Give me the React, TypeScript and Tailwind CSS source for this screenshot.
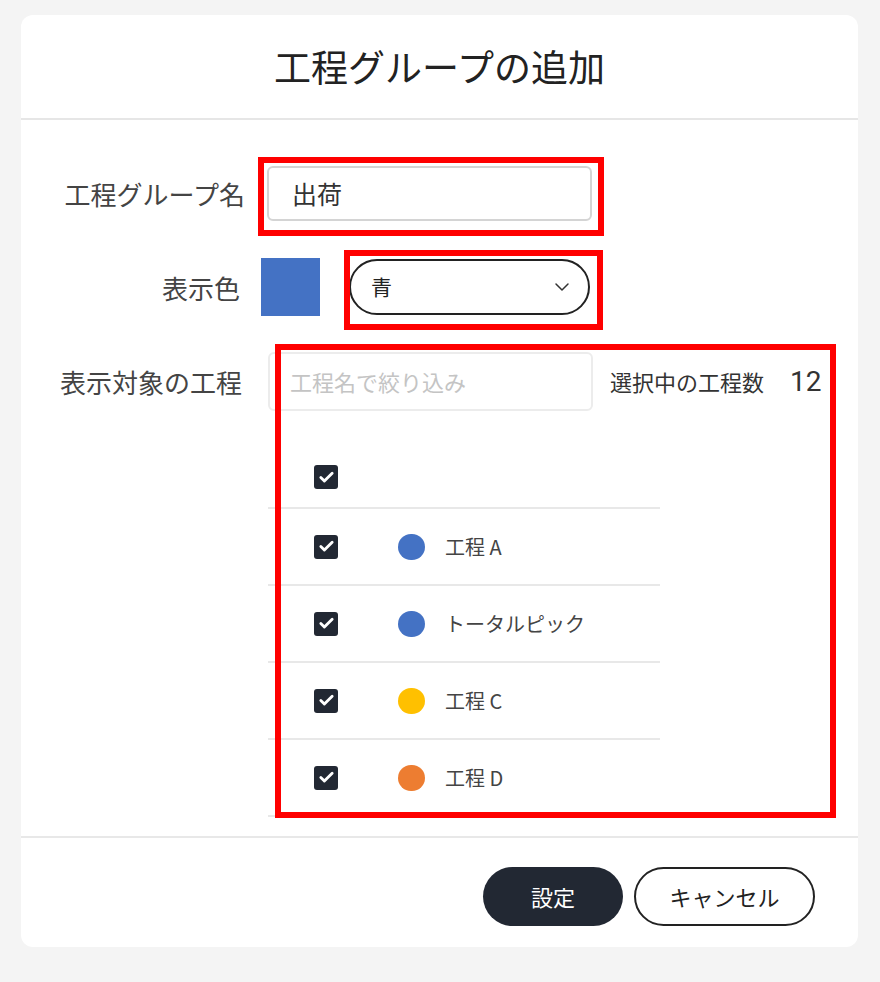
import React from "react";
import { Check, ChevronDown } from "lucide-react";

const font = { fontFamily: '"Noto Sans CJK JP", "Noto Sans", sans-serif' };

const processes = [
  { name: "工程 A", color: "bg-[#4472c4]" },
  { name: "トータルピック", color: "bg-[#4472c4]" },
  { name: "工程 C", color: "bg-[#ffc000]" },
  { name: "工程 D", color: "bg-[#ed7d31]" },
];

function CheckBox() {
  return (
    <div className="flex h-6 w-6 items-center justify-center rounded-[3px] bg-[#222833]">
      <Check className="h-[17px] w-[17px] text-white" strokeWidth={4} />
    </div>
  );
}

export default function App() {
  return (
    <div className="min-h-[982px] bg-[#f4f4f4] pl-[21px] pr-[22px] pt-[15px]" style={font}>
      <div className="relative flex h-[932px] flex-col rounded-[12px] bg-white">
        {/* header */}
        <div className="flex h-[105px] items-center justify-center border-b-2 border-[#e6e6e6]">
          <h1 className="text-[37px] leading-none text-[#222]">工程グループの追加</h1>
        </div>

        {/* body */}
        <div className="flex flex-col pt-[46px]">
          <div className="flex items-center">
            <div className="w-[224px] text-right text-[26px] text-[#444]">工程グループ名</div>
            <div className="ml-[22px] flex h-[55px] w-[325px] items-center rounded-[6px] border-2 border-[#d4d4d4] px-[23px] text-[25px] text-[#333]">
              出荷
            </div>
          </div>

          <div className="mt-[37px] flex items-center">
            <div className="w-[219px] text-right text-[26px] text-[#444]">表示色</div>
            <div className="ml-[21px] h-[58px] w-[59px] bg-[#4472c4]" />
            <div className="ml-[29px] flex h-[56px] w-[241px] items-center justify-between rounded-full border-2 border-[#222] pl-[20px] pr-[14px]">
              <span className="text-[21px] text-[#222]">青</span>
              <ChevronDown className="h-6 w-6 text-[#333]" strokeWidth={1.5} />
            </div>
          </div>

          <div className="mt-[36px] flex items-start">
            <div className="flex h-[59px] w-[221px] items-center justify-end text-[26px] text-[#444]">表示対象の工程</div>
            <div className="ml-[26px] flex flex-col">
              <div className="flex items-center">
                <div className="flex h-[59px] w-[325px] items-center rounded-[6px] border-2 border-[#ececec] px-[20px] text-[22px] text-[#c4c4c4]">
                  工程名で絞り込み
                </div>
                <div className="ml-[17px] text-[22px] text-[#333]">選択中の工程数</div>
                <div className="ml-[26px] text-[28px] text-[#333]" style={{ fontFamily: "Roboto, sans-serif" }}>12</div>
              </div>

              <div className="mt-[30px] w-[392px]">
                <div className="flex h-[68px] items-center border-b-2 border-[#e8e8e8] pl-[46px] pt-[6px]">
                  <CheckBox />
                </div>
                {processes.map((p) => (
                  <div key={p.name} className="flex h-[77px] items-center border-b-2 border-[#e8e8e8] pl-[46px]">
                    <CheckBox />
                    <div className={`ml-[60px] h-[26px] w-[27px] rounded-full ${p.color}`} />
                    <div className="ml-[20px] text-[20px] text-[#444]">{p.name}</div>
                  </div>
                ))}
              </div>
            </div>
          </div>
        </div>

        {/* footer */}
        <div className="mt-[19px] flex flex-1 items-start justify-end gap-[11px] border-t-2 border-[#e8e8e8] pr-[43px] pt-[29px]">
          <button className="h-[59px] w-[140px] rounded-full bg-[#222833] text-[22px] text-white">設定</button>
          <button className="h-[59px] w-[181px] rounded-full border-2 border-[#222] bg-white text-[22px] text-[#222]">
            キャンセル
          </button>
        </div>

        {/* annotation boxes */}
        <div className="absolute left-[237px] top-[142px] h-[79px] w-[346px] border-[6px] border-[#ff0000]" />
        <div className="absolute left-[323px] top-[235px] h-[80px] w-[259px] border-[6px] border-[#ff0000]" />
        <div className="absolute left-[254px] top-[329px] h-[474px] w-[561px] border-[6px] border-[#ff0000]" />
      </div>
    </div>
  );
}
